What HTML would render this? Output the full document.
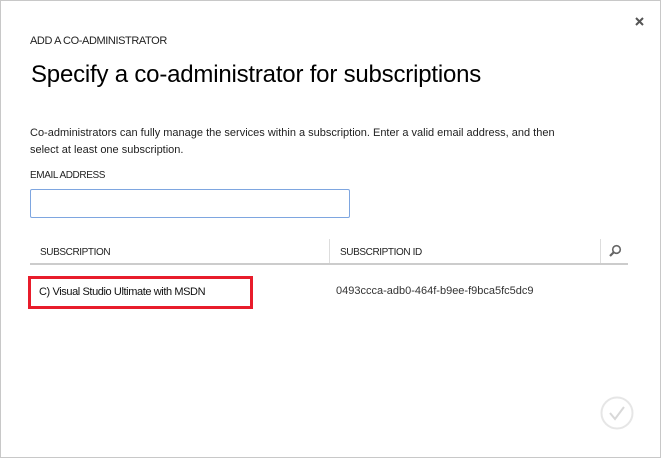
<!DOCTYPE html>
<html><head><style>
body{margin:0;width:661px;height:458px;overflow:hidden;background:#fff;font-family:"Liberation Sans",sans-serif;color:#000}
.f{position:absolute;left:0;top:0;width:659px;height:456px;border:1px solid #c8c8c8}
.t{position:absolute;white-space:nowrap}
.s{font-size:11px;letter-spacing:-0.4px}
</style></head><body>
<div class="f"></div>
<svg class="t" style="left:634px;top:16px" width="11" height="11"><path d="M2 2L9 9M9 2L2 9" stroke="#555" stroke-width="2"/></svg>
<div class="t s" style="left:30px;top:35px;color:#222">ADD A CO-ADMINISTRATOR</div>
<div class="t" style="left:31px;top:61px;font-size:24px;letter-spacing:-0.2px">Specify a co-administrator for subscriptions</div>
<div class="t s" style="left:30px;top:125px;line-height:17px;color:#222;letter-spacing:0px">Co-administrators can fully manage the services within a subscription. Enter a valid email address, and then<br>select at least one subscription.</div>
<div class="t s" style="left:30px;top:170px;font-size:10px;color:#222">EMAIL ADDRESS</div>
<div class="t" style="left:30px;top:189px;width:318px;height:27px;border:1px solid #7ea6e0;border-radius:2px"></div>
<div class="t s" style="left:40px;top:247px;font-size:10px;color:#222">SUBSCRIPTION</div>
<div class="t s" style="left:340px;top:247px;font-size:10px;color:#222">SUBSCRIPTION ID</div>
<div class="t" style="left:329px;top:239px;width:1px;height:24px;background:#ddd"></div>
<div class="t" style="left:600px;top:239px;width:1px;height:24px;background:#ddd"></div>
<div class="t" style="left:30px;top:263px;width:598px;height:2px;background:#ccc"></div>
<svg class="t" style="left:608px;top:244px" width="14" height="14"><circle cx="8.5" cy="5.5" r="3.8" fill="none" stroke="#666" stroke-width="1.6"/><path d="M6 8L2 12" stroke="#666" stroke-width="2.2"/></svg>
<div class="t" style="left:28px;top:276px;width:219px;height:27px;border:3px solid #e81c2b"></div>
<div class="t s" style="left:39px;top:286px;color:#111">C) Visual Studio Ultimate with MSDN</div>
<div class="t s" style="left:336px;top:285px;color:#333;letter-spacing:0px">0493ccca-adb0-464f-b9ee-f9bca5fc5dc9</div>
<svg class="t" style="left:600px;top:396px" width="34" height="34"><circle cx="17" cy="17" r="15.5" fill="none" stroke="#e6e6e6" stroke-width="2"/><path d="M10 17L15 23L24 11" fill="none" stroke="#d8d8d8" stroke-width="2"/></svg>
</body></html>
